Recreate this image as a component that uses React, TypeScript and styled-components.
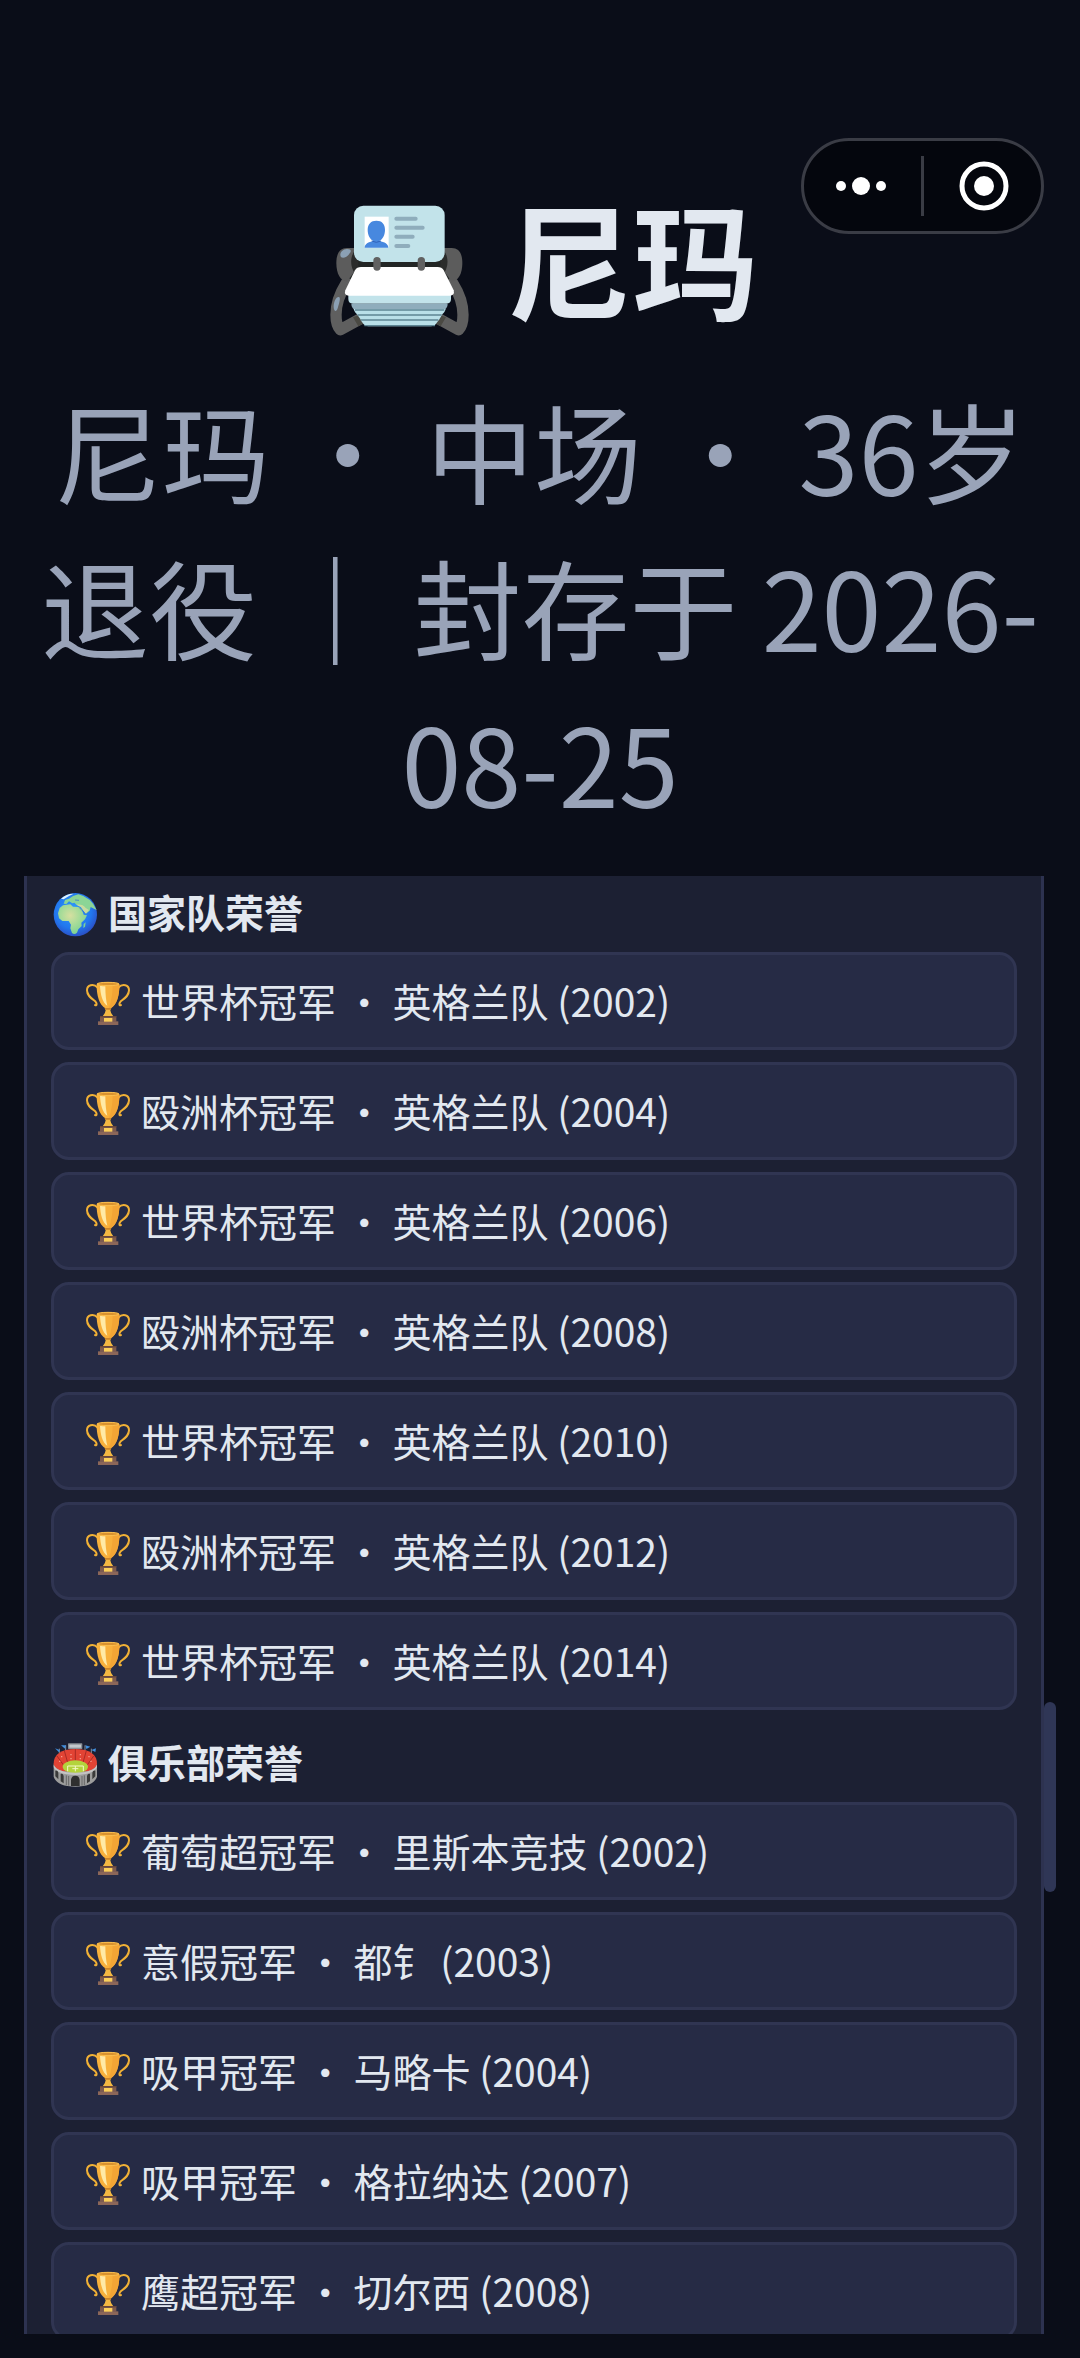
import React from 'react'
import styled, { createGlobalStyle } from 'styled-components';

interface IHonor {
  cup: string;
  team: string;
  year: number;
}

const nationalHonors: IHonor[] = [
  { cup: '世界杯冠军', team: '英格兰队', year: 2002 },
  { cup: '殴洲杯冠军', team: '英格兰队', year: 2004 },
  { cup: '世界杯冠军', team: '英格兰队', year: 2006 },
  { cup: '殴洲杯冠军', team: '英格兰队', year: 2008 },
  { cup: '世界杯冠军', team: '英格兰队', year: 2010 },
  { cup: '殴洲杯冠军', team: '英格兰队', year: 2012 },
  { cup: '世界杯冠军', team: '英格兰队', year: 2014 },
]

const clubHonors: IHonor[] = [
  { cup: '葡萄超冠军', team: '里斯本竞技', year: 2002 },
  { cup: '意假冠军', team: '都钅', year: 2003 },
  { cup: '吸甲冠军', team: '马略卡', year: 2004 },
  { cup: '吸甲冠军', team: '格拉纳达', year: 2007 },
  { cup: '鹰超冠军', team: '切尔西', year: 2008 },
]

const CardIndexIcon = () => (
  <TitleIcon viewBox="67 -5 471 471" aria-hidden="true">
    <path d="M150 212 H448 V300 H150Z" fill="#232625" />
    <g fill="none" stroke="#5f5f5f" strokeLinecap="round" strokeLinejoin="round">
      <path d="M140 310 C118 345 109 372 109 405 C109 425 112 440 122 450 L192 412" strokeWidth="34" />
      <path d="M459 310 C481 345 490 372 490 405 C490 425 487 440 477 450 L407 412" strokeWidth="34" />
    </g>
    <path d="M160 413 L188 402 L200 428 L176 440Z M439 413 L411 402 L399 428 L423 440Z" fill="#4a4943" />
    <path d="M170 205 H142 C120 205 110 222 110 250 C110 282 122 304 142 306 L168 270Z" fill="#5c5c5c" />
    <path d="M428 205 H456 C478 205 488 222 488 250 C488 282 476 304 456 306 L430 270Z" fill="#5c5c5c" />
    <path d="M164 215 C150 235 152 262 166 282 L176 264 V215Z M434 215 C448 235 446 262 432 282 L422 264 V215Z" fill="#2b2c2b" />
    <path d="M124 232 C118 222 126 209 142 208 C155 208 156 214 150 221 C144 232 130 238 124 232Z" fill="#8ba0b4" />
    <path d="M102 382 C102 365 110 350 118 352 C124 355 118 372 114 386 C110 398 103 396 102 382Z" fill="#8ba0b4" />
    <path d="M146 340 H454 V358 Q454 372 440 372 H160 Q146 372 146 358Z" fill="#c2e3ea" />
    <path d="M155 372 H444 Q444 384 434 390 H165 Q155 384 155 372Z" fill="#8fadbc" />
    <path d="M162 388 H438 Q434 402 424 406 H176 Q166 402 162 388Z" fill="#b9dfe8" />
    <path d="M172 404 H428 L418 421 H184Z" fill="#b9dfe8" />
    <path d="M182 420 H418 L408 434 Q404 440 394 440 H206 Q196 440 192 434Z" fill="#b9dfe8" />
    <path d="M166 391 H434 M174 406 H426 M184 421 H416 M194 438 H406" stroke="#5d8593" strokeWidth="4" />
    <rect x="163" y="78" width="272" height="169" rx="28" fill="#c2e3ea" />
    <path d="M184 262 H414 Q426 262 432 272 L462 332 Q466 348 450 348 H148 Q132 348 137 332 L166 272 Q172 262 184 262Z" fill="#fff" />
    <rect x="195" y="111" width="72" height="93" fill="#fff" />
    <path d="M204 150 C204 133 214 123 230 123 C247 123 256 133 256 150 C256 167 248 179 239 184 C255 187 266 193 266 204 H195 C195 193 206 187 221 184 C212 179 204 167 204 150Z" fill="#4788df" />
    <path d="M216 184 Q230 192 244 184" fill="none" stroke="#2f62ba" strokeWidth="3" />
    <path d="M290 117 H348 M290 144 H369 M290 171 H339 M290 199 H326" stroke="#8fadbc" strokeWidth="12" strokeLinecap="round" />
    <path d="M232 243 V262 M365 243 V262" stroke="#616161" strokeWidth="22" strokeLinecap="round" />
  </TitleIcon>
)

const GlobeIcon = () => (
  <RowIcon viewBox="0 -3 144 144" aria-hidden="true">
    <defs>
      <radialGradient id="sea" cx="45%" cy="40%" r="60%">
        <stop offset="0" stopColor="#2f9dfb" />
        <stop offset="0.7" stopColor="#2277ee" />
        <stop offset="1" stopColor="#2a52c8" />
      </radialGradient>
      <radialGradient id="land" cx="42%" cy="38%" r="62%">
        <stop offset="0" stopColor="#d6dfa0" />
        <stop offset="0.5" stopColor="#a9dc99" />
        <stop offset="1" stopColor="#7fd394" />
      </radialGradient>
    </defs>
    <circle cx="73" cy="80" r="65" fill="url(#sea)" />
    <path d="M21 76 L26 60 L36 52 L58 49 L66 56 L84 57 L92 63 L98 80 L108 82 L102 94 L91 104 L92 114 L82 124 L78 134 Q70 142 63 135 L58 121 L60 110 L53 99 L34 99 L24 91Z" fill="url(#land)" />
    <path d="M38 47 L42 36 L54 32 L66 24 L82 19 Q120 28 137 66 L129 62 L119 57 L116 68 L104 78 L96 66 L88 54 L76 50 L70 44 L64 46 L54 40 L46 48Z" fill="#8bd596" />
    <path d="M76 50 Q96 48 104 60 L114 66 L104 77 L90 58Z" fill="#c9dba0" />
    <path d="M84 58 L94 68 L104 78 M72 36 L84 37" fill="none" stroke="#2a63d0" strokeWidth="2" />
    <path d="M98 108 L104 103 L102 116 L97 120Z" fill="#7fd394" />
    <path d="M30 32 Q48 16 68 17 L54 24 L38 34Z" fill="#dff2fa" />
  </RowIcon>
)

const StadiumIcon = () => (
  <RowIcon viewBox="0 -3 144 144" aria-hidden="true">
    <path d="M25 32 V46 M44 22 V38 M102 22 V38 M121 32 V46" stroke="#8a8f98" strokeWidth="3" />
    <path d="M12 31 L26 36 L24 43Z M30 22 L45 22 L42 32Z M103 22 L118 26 L106 33Z M121 36 L135 31 L133 42Z" fill="#3f8fe0" />
    <path d="M8 76 Q8 90 73 90 Q138 90 138 76 V116 Q128 146 73 146 Q18 146 8 116Z" fill="#9c9c9c" />
    <path d="M8 78 Q8 34 73 33 Q138 34 138 78 Q136 94 110 100 H36 Q10 94 8 78Z" fill="#e24334" />
    <path d="M40 38 L50 74 M73 32 V70 M106 38 L96 74 M18 54 L38 82 M128 54 L108 82" stroke="#a92a24" strokeWidth="3" />
    <path d="M30 56 h4 M58 50 h4 M86 50 h4 M112 56 h4 M58 62 h4 M86 62 h4 M24 70 h4 M118 70 h4" stroke="#f59b8c" strokeWidth="4" />
    <ellipse cx="73" cy="86" rx="38" ry="19" fill="#b4d33c" />
    <path d="M50 100 V84 H97 V100 M73 84 V100 M64 92 H82" fill="none" stroke="#f5f8c8" strokeWidth="3" />
    <path d="M8 80 Q18 103 73 104 Q128 103 138 80 V88 Q128 110 73 111 Q18 110 8 88Z" fill="#c4c4c4" />
    <path d="M13 98 Q20 96 22 104 V124 L13 115Z M29 108 Q36 106 38 114 V136 L29 130Z M133 98 Q126 96 124 104 V124 L133 115Z M117 108 Q110 106 108 114 V136 L117 130Z" fill="#3a3a3a" />
    <path d="M46 112 V141 M100 112 V141 M53 114 V143 M93 114 V143" stroke="#686868" strokeWidth="3" />
    <path d="M60 144 V126 Q61 113 73 113 Q85 113 86 126 V144Z" fill="#2f2f2f" />
    <rect x="51" y="16" width="43" height="17" rx="2" fill="#8b9097" />
    <rect x="55" y="20" width="35" height="9" fill="#c3c8cc" />
  </RowIcon>
)

const TrophyIcon = () => (
  <RowIcon viewBox="0 -3 144 144" aria-hidden="true">
    <g fill="none" stroke="#f1b136" strokeWidth="6" strokeLinecap="round">
      <path d="M41 32 C28 18 9 24 9 40 C9 56 22 64 34 73 C40 80 38 88 33 84" />
      <path d="M103 32 C116 18 135 24 135 40 C135 56 122 64 110 73 C104 80 106 88 111 84" />
    </g>
    <path d="M38 21 Q72 9 106 21 C107 55 98 84 80 94 H64 C46 84 37 55 38 21Z" fill="#f8b13c" />
    <path d="M86 24 L106 21 C107 55 98 84 80 94 H74 Q86 62 86 24Z" fill="#f3a535" />
    <path d="M48 26 Q56 28 64 28 C64 52 66 72 70 86 C56 78 49 52 48 26Z" fill="#ffeaa6" />
    <ellipse cx="72" cy="21" rx="33" ry="5" fill="#d8922f" stroke="#fcc04e" strokeWidth="3" />
    <path d="M62 93 H82 L79 100 Q80 110 88 118 H56 Q64 110 65 100Z" fill="#f4b942" />
    <path d="M62 93 H82 L80 98 H64Z" fill="#c9832a" />
    <path d="M48 117 H97 V134 H48Z" fill="#7d5b4f" />
    <path d="M42 133 H103 V144 H42Z" fill="#8b6658" />
    <path d="M48 117 H97 V121 H48Z" fill="#684639" />
    <rect x="60" y="123" width="25" height="11" fill="#fbd05b" />
  </RowIcon>
)

const HonorGroup = ({icon, title, honors}:{icon: React.ReactNode, title: string, honors: IHonor[]}) => (
  <Group>
    <GroupTitle>{icon}{title}</GroupTitle>
    <HonorList>
      {honors.map(honor => (
        <HonorItem key={honor.cup + honor.year}>
          <TrophyIcon />
          <span>{honor.cup} ・ {honor.team} ({honor.year})</span>
        </HonorItem>
      ))}
    </HonorList>
  </Group>
)

const App = () => {
  return (
    <Page lang="zh-CN">
      <GlobalStyle />
      <Capsule>
        <CapsuleButton type="button" aria-label="更多">
          <svg width="60" height="60" viewBox="0 0 60 60" fill="#fff">
            <circle cx="8" cy="30" r="5" />
            <circle cx="28" cy="30" r="9" />
            <circle cx="48" cy="30" r="5" />
          </svg>
        </CapsuleButton>
        <CapsuleLine />
        <CapsuleButton type="button" aria-label="关闭">
          <svg width="60" height="60" viewBox="-1 0 60 60">
            <circle cx="30" cy="30" r="22" fill="none" stroke="#fff" strokeWidth="5" />
            <circle cx="30" cy="30" r="10" fill="#fff" />
          </svg>
        </CapsuleButton>
      </Capsule>
      <Header>
        <Title><CardIndexIcon />尼玛</Title>
        <SubTitle>尼玛 ・ 中场 ・ 36岁退役 ｜ 封存于 2026-08-25</SubTitle>
      </Header>
      <ScrollArea>
        <Panel>
          <HonorGroup icon={<GlobeIcon />} title="国家队荣誉" honors={nationalHonors} />
          <HonorGroup icon={<StadiumIcon />} title="俱乐部荣誉" honors={clubHonors} />
        </Panel>
        <ScrollThumb />
      </ScrollArea>
    </Page>
  )
}

const GlobalStyle = createGlobalStyle`
  * {
    box-sizing: border-box;
  }
  body {
    margin: 0;
    background-color: #0a0d18;
    color: #e2e8f0;
    font-family: 'Noto Sans CJK SC', sans-serif;
  }
`;

const Page = styled.div`
  position: relative;
  display: flex;
  flex-direction: column;
  height: 100vh;
  padding: 165px 24px 24px;
  overflow: hidden;
`;

const Capsule = styled.div`
  position: absolute;
  top: 138px;
  right: 36px;
  display: flex;
  align-items: center;
  width: 243px;
  height: 96px;
  border: 3px solid #3a3c45;
  border-radius: 48px;
  background-color: #04060d;
`;

const CapsuleButton = styled.button`
  flex: 1;
  display: flex;
  align-items: center;
  justify-content: center;
  height: 100%;
  padding: 0;
  border: none;
  background: none;
  cursor: pointer;
`;

const CapsuleLine = styled.span`
  width: 3px;
  height: 60px;
  background-color: #3a3c45;
`;

const Header = styled.header`
  display: flex;
  flex-direction: column;
  gap: 24px;
  margin-bottom: 37px;
  text-align: center;
`;

const Title = styled.h1`
  display: flex;
  align-items: center;
  justify-content: center;
  gap: 28px;
  margin: 0;
  font-size: 126px;
  line-height: 182px;
  font-weight: 700;
`;

const TitleIcon = styled.svg`
  width: 157px;
  height: 157px;
  overflow: visible;
`;

const SubTitle = styled.p`
  margin: 0;
  color: #99a3b8;
  font-size: 108px;
  line-height: 156px;
`;

const ScrollArea = styled.main`
  position: relative;
  flex: 1;
  min-height: 0;
  padding-right: 12px;
  overflow: hidden;
`;

const ScrollThumb = styled.span`
  position: absolute;
  top: 826px;
  right: 0;
  width: 12px;
  height: 190px;
  border-radius: 6px;
  background-color: #2f3656;
`;

const Panel = styled.div`
  display: flex;
  flex-direction: column;
  gap: 24px;
  padding: 8px 24px;
  border-left: 3px solid #2d3250;
  border-right: 3px solid #2d3250;
  background-color: #1c2033;
`;

const Group = styled.section`
  display: flex;
  flex-direction: column;
  gap: 12px;
`;

const GroupTitle = styled.h2`
  display: flex;
  align-items: center;
  gap: 9px;
  margin: 0;
  padding-bottom: 2px;
  font-size: 39px;
  line-height: 54px;
  font-weight: 700;
`;

const HonorList = styled.ul`
  display: flex;
  flex-direction: column;
  gap: 12px;
  margin: 0;
  padding: 0;
  list-style: none;
`;

const HonorItem = styled.li`
  display: flex;
  align-items: center;
  gap: 9px;
  padding: 18px 30px 20px;
  border: 3px solid #303552;
  border-radius: 18px;
  background-color: #262b45;
  font-size: 39px;
  line-height: 54px;
`;

const RowIcon = styled.svg`
  flex: none;
  width: 48px;
  height: 48px;
  overflow: visible;
`;

export default App
